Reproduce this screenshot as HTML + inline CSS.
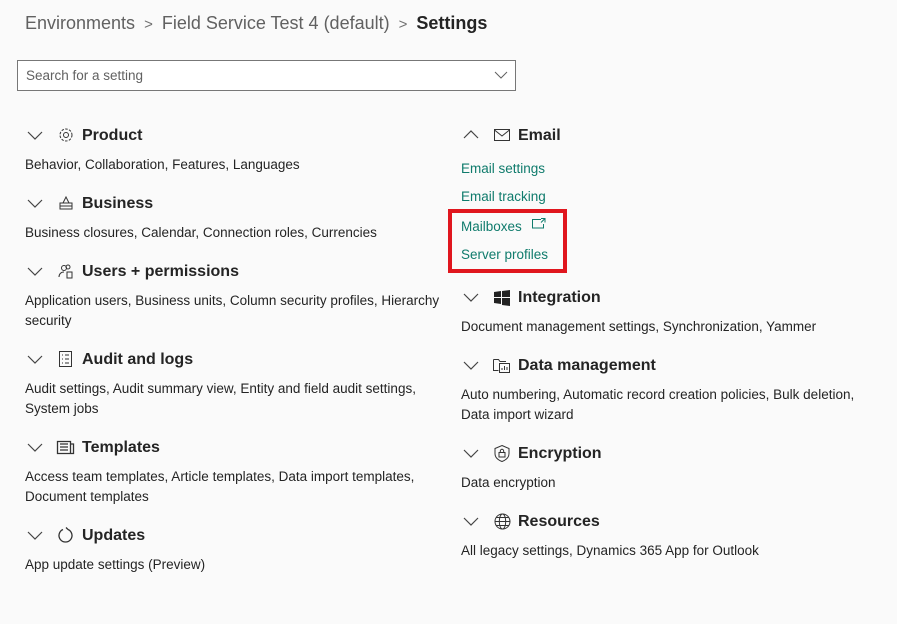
<!DOCTYPE html>
<html><head><meta charset="utf-8"><style>
body{margin:0;width:897px;height:624px;background:#fafafa;font-family:"Liberation Sans",sans-serif;color:#242424;position:relative;overflow:hidden}
.a{position:absolute;white-space:nowrap}
.bc{top:11px;left:25px;font-size:18px;line-height:24px;color:#616161}
.bc b{color:#242424}
.bc span{margin:0 9px;color:#707070;font-size:15px}
.search{left:17px;top:60px;width:497px;height:29px;border:1px solid #777;background:#fff}
.search .ph{position:absolute;left:8px;top:7px;font-size:13.5px;color:#616161}
.h{font-size:16px;font-weight:bold;line-height:20px;height:20px}
.t{font-size:13.5px;line-height:20px;color:#242424}
.l{font-size:13.5px;line-height:20px;color:#0f7b6c}
svg{position:absolute;overflow:visible}
.red{left:448px;top:209px;width:111px;height:56px;border:4px solid #e0161e}
</style></head><body>
<div class="a bc">Environments<span>&gt;</span>Field Service Test 4 (default)<span>&gt;</span><b>Settings</b></div>
<div class="a search"><div class="ph">Search for a setting</div>
<svg style="left:477px;top:11px" width="12" height="7"><polyline points="0,0 6,6 12,0" fill="none" stroke="#616161" stroke-width="1"/></svg></div>

<svg style="left:28px;top:132px" width="14" height="7"><polyline points="0,0 7,7 14,0" fill="none" stroke="#444" stroke-width="1.2"/></svg>
<svg style="left:28px;top:200px" width="14" height="7"><polyline points="0,0 7,7 14,0" fill="none" stroke="#444" stroke-width="1.2"/></svg>
<svg style="left:28px;top:268px" width="14" height="7"><polyline points="0,0 7,7 14,0" fill="none" stroke="#444" stroke-width="1.2"/></svg>
<svg style="left:28px;top:356px" width="14" height="7"><polyline points="0,0 7,7 14,0" fill="none" stroke="#444" stroke-width="1.2"/></svg>
<svg style="left:28px;top:444px" width="14" height="7"><polyline points="0,0 7,7 14,0" fill="none" stroke="#444" stroke-width="1.2"/></svg>
<svg style="left:28px;top:532px" width="14" height="7"><polyline points="0,0 7,7 14,0" fill="none" stroke="#444" stroke-width="1.2"/></svg>
<svg style="left:464px;top:131px" width="14" height="7"><polyline points="0,7 7,0 14,7" fill="none" stroke="#444" stroke-width="1.2"/></svg>
<svg style="left:464px;top:294px" width="14" height="7"><polyline points="0,0 7,7 14,0" fill="none" stroke="#444" stroke-width="1.2"/></svg>
<svg style="left:464px;top:362px" width="14" height="7"><polyline points="0,0 7,7 14,0" fill="none" stroke="#444" stroke-width="1.2"/></svg>
<svg style="left:464px;top:450px" width="14" height="7"><polyline points="0,0 7,7 14,0" fill="none" stroke="#444" stroke-width="1.2"/></svg>
<svg style="left:464px;top:518px" width="14" height="7"><polyline points="0,0 7,7 14,0" fill="none" stroke="#444" stroke-width="1.2"/></svg>

<svg style="left:58px;top:127px" width="16" height="16"><circle cx="8" cy="8" r="2.5" fill="none" stroke="#333"/><circle cx="8" cy="8" r="6" fill="none" stroke="#333" stroke-dasharray="2.5 1.4"/></svg>
<svg style="left:58px;top:195px" width="16" height="16"><path d="M2 8h12v6H2zM2 11h12M5 8l3-6 3 6" fill="none" stroke="#333"/></svg>
<svg style="left:58px;top:263px" width="16" height="16"><circle cx="6" cy="5" r="2.5" fill="none" stroke="#333"/><path d="M1 14c0-3 2-5 5-5M10 2a2 2 0 1 1 0 4a2 2 0 1 1 0-4M9 9h5v6H9z" fill="none" stroke="#333"/></svg>
<svg style="left:59px;top:351px" width="14" height="17"><rect x="0.5" y="0.5" width="12" height="15" fill="none" stroke="#333"/><path d="M3 4h1M6 4h4M3 8h1M6 8h4M3 12h1M6 12h4" stroke="#333"/></svg>
<svg style="left:57px;top:440px" width="17" height="15"><path d="M0.5 1.5h13v12h-13zM13.5 4h3v9.5h-3M3 4h8M3 7h8M3 10h8" fill="none" stroke="#333" stroke-width="1.3"/></svg>
<svg style="left:58px;top:527px" width="16" height="17"><path d="M5 2.5A6.5 6.5 0 1 0 10 2.5M10 2.5L8 0.5" fill="none" stroke="#333" stroke-width="1.3"/></svg>
<svg style="left:494px;top:129px" width="16" height="12"><rect x="0.5" y="0.5" width="15" height="11" fill="none" stroke="#333"/><polyline points="0.5,1 8,7 15.5,1" fill="none" stroke="#333"/></svg>
<svg style="left:494px;top:290px" width="16" height="16"><path d="M0 2l7-1v6H0zM8 1l8-1v7H8zM0 8h7v6l-7-1zM8 8h8v8l-8-1z" fill="#222"/></svg>
<svg style="left:493px;top:357px" width="18" height="17"><path d="M0.5 2.5h5l1.5 2h6M0.5 2.5v11h5" fill="none" stroke="#333"/><rect x="6.5" y="6.5" width="10" height="9" fill="none" stroke="#333"/><path d="M9 13v-2M11.5 13v-4M14 13v-3" stroke="#333"/></svg>
<svg style="left:494px;top:445px" width="16" height="17"><path d="M8 0.5l7 3v5c0 4-3 6.5-7 8c-4-1.5-7-4-7-8v-5z" fill="none" stroke="#333"/><rect x="5" y="7.5" width="6" height="4.5" fill="none" stroke="#333"/><path d="M6.3 7.5v-1.5a1.7 1.7 0 0 1 3.4 0v1.5" fill="none" stroke="#333"/></svg>
<svg style="left:494px;top:513px" width="17" height="17"><circle cx="8.5" cy="8.5" r="7.5" fill="none" stroke="#333"/><ellipse cx="8.5" cy="8.5" rx="3.2" ry="7.5" fill="none" stroke="#333"/><path d="M1 8.5h15M2.5 4.5h12M2.5 12.5h12" stroke="#333"/></svg>

<div class="a h" style="left:82px;top:126px">Product</div>
<div class="a t" style="left:25px;top:155px">Behavior, Collaboration, Features, Languages</div>
<div class="a h" style="left:82px;top:194px">Business</div>
<div class="a t" style="left:25px;top:223px">Business closures, Calendar, Connection roles, Currencies</div>
<div class="a h" style="left:82px;top:262px">Users + permissions</div>
<div class="a t" style="left:25px;top:291px">Application users, Business units, Column security profiles, Hierarchy<br>security</div>
<div class="a h" style="left:82px;top:350px">Audit and logs</div>
<div class="a t" style="left:25px;top:379px">Audit settings, Audit summary view, Entity and field audit settings,<br>System jobs</div>
<div class="a h" style="left:82px;top:438px">Templates</div>
<div class="a t" style="left:25px;top:467px">Access team templates, Article templates, Data import templates,<br>Document templates</div>
<div class="a h" style="left:82px;top:526px">Updates</div>
<div class="a t" style="left:25px;top:555px">App update settings (Preview)</div>

<div class="a h" style="left:518px;top:126px">Email</div>
<div class="a l" style="left:461px;top:159px">Email settings</div>
<div class="a l" style="left:461px;top:187px">Email tracking</div>
<div class="a l" style="left:461px;top:217px">Mailboxes</div>
<svg style="left:532px;top:218px" width="14" height="11"><path d="M9 1.5H0.5v8.5h11V6M9 0.5h4v4M13 0.5l-4 4" fill="none" stroke="#0f7b6c"/></svg>
<div class="a l" style="left:461px;top:245px">Server profiles</div>
<div class="a red"></div>
<div class="a h" style="left:518px;top:288px">Integration</div>
<div class="a t" style="left:461px;top:317px">Document management settings, Synchronization, Yammer</div>
<div class="a h" style="left:518px;top:356px">Data management</div>
<div class="a t" style="left:461px;top:385px">Auto numbering, Automatic record creation policies, Bulk deletion,<br>Data import wizard</div>
<div class="a h" style="left:518px;top:444px">Encryption</div>
<div class="a t" style="left:461px;top:473px">Data encryption</div>
<div class="a h" style="left:518px;top:512px">Resources</div>
<div class="a t" style="left:461px;top:541px">All legacy settings, Dynamics 365 App for Outlook</div>
</body></html>
